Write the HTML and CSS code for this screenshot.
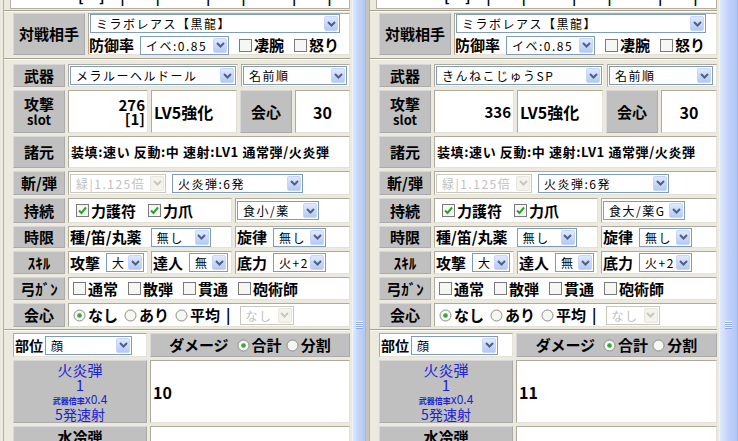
FILE: index.html
```html
<!DOCTYPE html>
<html lang="ja">
<head>
<meta charset="UTF-8">
<meta name="viewport" content="width=device-width, initial-scale=1">
<title>ダメージ計算 比較</title>
<link rel="stylesheet" href="styles.css">
</head>
<body>

<!-- 左: メラルーヘルドール -->
<div class="frame frame-left">
  <div class="page">
    <div class="wrap">
      <div class="strip"><span class="strip-text">[ ] | &nbsp;| &nbsp; | &nbsp;| &nbsp; | &nbsp;|</span></div>

      <div class="sec sec-enemy">
        <div class="label">対戦相手</div>
        <div class="cell enemy-cell">
          <div class="line">
            <span class="sel sel-enemy"><select><option>ミラボレアス【黒龍】</option></select><span class="sel-btn"><svg class="chev" viewBox="0 0 9 6"><path d="M1 1l3.5 3.5L8 1"/></svg></span></span>
          </div>
          <div class="line">
            <span>防御率</span>
            <span class="sel sel-def"><select><option>イベ:0.85</option></select><span class="sel-btn"><svg class="chev" viewBox="0 0 9 6"><path d="M1 1l3.5 3.5L8 1"/></svg></span></span>
            <label class="chk"><svg class="box" viewBox="0 0 13 13"><rect x=".5" y=".5" width="12" height="12"/></svg>凄腕</label>
            <label class="chk"><svg class="box" viewBox="0 0 13 13"><rect x=".5" y=".5" width="12" height="12"/></svg>怒り</label>
          </div>
        </div>
      </div>

      <div class="sec sec-main">
        <div class="row r-weapon">
          <div class="label">武器</div>
          <div class="cell c-name"><span class="sel sel-weapon"><select><option>メラルーヘルドール</option></select><span class="sel-btn"><svg class="chev" viewBox="0 0 9 6"><path d="M1 1l3.5 3.5L8 1"/></svg></span></span></div>
          <div class="cell"><span class="sel sel-sort"><select><option>名前順</option></select><span class="sel-btn"><svg class="chev" viewBox="0 0 9 6"><path d="M1 1l3.5 3.5L8 1"/></svg></span></span></div>
        </div>
        <div class="row r-attack">
          <div class="label">攻撃<small>slot</small></div>
          <div class="cell c-val"><span>276</span><span>[1]</span></div>
          <div class="cell c-lv">LV5強化</div>
          <div class="label c-crit">会心</div>
          <div class="cell c-num">30</div>
        </div>
        <div class="row r-spec">
          <div class="label">諸元</div>
          <div class="cell spec">装填:速い 反動:中 速射:LV1 通常弾/火炎弾</div>
        </div>
        <div class="row r-ammo">
          <div class="label">斬/弾</div>
          <div class="cell">
            <span class="sel sel-sharp is-off"><select disabled><option>緑|1.125倍</option></select><span class="sel-btn"><svg class="chev" viewBox="0 0 9 6"><path d="M1 1l3.5 3.5L8 1"/></svg></span></span>
            <span class="sel sel-ammo"><select><option>火炎弾:6発</option></select><span class="sel-btn"><svg class="chev" viewBox="0 0 9 6"><path d="M1 1l3.5 3.5L8 1"/></svg></span></span>
          </div>
        </div>
        <div class="row r-buff">
          <div class="label">持続</div>
          <div class="cell c-wide checks buff">
            <label class="chk"><svg class="box" viewBox="0 0 13 13"><rect x=".5" y=".5" width="12" height="12"/><path d="M3 6.5l2.5 2.5 4.5-5.5"/></svg>力護符</label>
            <label class="chk"><svg class="box" viewBox="0 0 13 13"><rect x=".5" y=".5" width="12" height="12"/><path d="M3 6.5l2.5 2.5 4.5-5.5"/></svg>力爪</label>
          </div>
          <div class="cell"><span class="sel sel-food"><select><option>食小/薬</option></select><span class="sel-btn"><svg class="chev" viewBox="0 0 9 6"><path d="M1 1l3.5 3.5L8 1"/></svg></span></span></div>
        </div>
        <div class="row r-item">
          <div class="label">時限</div>
          <div class="cell c-wide item">種/笛/丸薬<span class="sel sel-item"><select><option>無し</option></select><span class="sel-btn"><svg class="chev" viewBox="0 0 9 6"><path d="M1 1l3.5 3.5L8 1"/></svg></span></span></div>
          <div class="cell">旋律<span class="sel sel-song"><select><option>無し</option></select><span class="sel-btn"><svg class="chev" viewBox="0 0 9 6"><path d="M1 1l3.5 3.5L8 1"/></svg></span></span></div>
        </div>
        <div class="row r-skill">
          <div class="label">ｽｷﾙ</div>
          <div class="cell c-atk">攻撃<span class="sel sel-atk"><select><option>大</option></select><span class="sel-btn"><svg class="chev" viewBox="0 0 9 6"><path d="M1 1l3.5 3.5L8 1"/></svg></span></span></div>
          <div class="cell c-master">達人<span class="sel sel-master"><select><option>無</option></select><span class="sel-btn"><svg class="chev" viewBox="0 0 9 6"><path d="M1 1l3.5 3.5L8 1"/></svg></span></span></div>
          <div class="cell">底力<span class="sel sel-adren"><select><option>火+2</option></select><span class="sel-btn"><svg class="chev" viewBox="0 0 9 6"><path d="M1 1l3.5 3.5L8 1"/></svg></span></span></div>
        </div>
        <div class="row r-gun">
          <div class="label">弓ｶﾞﾝ</div>
          <div class="cell checks">
            <label class="chk"><svg class="box" viewBox="0 0 13 13"><rect x=".5" y=".5" width="12" height="12"/></svg>通常</label>
            <label class="chk"><svg class="box" viewBox="0 0 13 13"><rect x=".5" y=".5" width="12" height="12"/></svg>散弾</label>
            <label class="chk"><svg class="box" viewBox="0 0 13 13"><rect x=".5" y=".5" width="12" height="12"/></svg>貫通</label>
            <label class="chk"><svg class="box" viewBox="0 0 13 13"><rect x=".5" y=".5" width="12" height="12"/></svg>砲術師</label>
          </div>
        </div>
        <div class="row r-crit">
          <div class="label">会心</div>
          <div class="cell radios">
            <label class="chk"><svg class="dot" viewBox="0 0 13 13"><circle class="ring" cx="6.5" cy="6.5" r="5.5"/><circle class="pip" cx="6.5" cy="6.5" r="2.3"/></svg>なし</label>
            <label class="chk"><svg class="dot" viewBox="0 0 13 13"><circle class="ring" cx="6.5" cy="6.5" r="5.5"/></svg>あり</label>
            <label class="chk"><svg class="dot" viewBox="0 0 13 13"><circle class="ring" cx="6.5" cy="6.5" r="5.5"/></svg>平均</label>
            <span class="bar">|</span>
            <span class="sel sel-crit is-off"><select disabled><option>なし</option></select><span class="sel-btn"><svg class="chev" viewBox="0 0 9 6"><path d="M1 1l3.5 3.5L8 1"/></svg></span></span>
          </div>
        </div>
      </div>

      <div class="sec sec-dmg">
        <div class="cell part">部位<span class="sel sel-part"><select><option>顔</option></select><span class="sel-btn"><svg class="chev" viewBox="0 0 9 6"><path d="M1 1l3.5 3.5L8 1"/></svg></span></span></div>
        <div class="label dmg-head">ダメージ
          <label class="chk"><svg class="dot" viewBox="0 0 13 13"><circle class="ring" cx="6.5" cy="6.5" r="5.5"/><circle class="pip" cx="6.5" cy="6.5" r="2.3"/></svg>合計</label>
          <label class="chk"><svg class="dot" viewBox="0 0 13 13"><circle class="ring" cx="6.5" cy="6.5" r="5.5"/></svg>分割</label>
        </div>
        <div class="label ammo-name">
          <span>火炎弾</span><span>1</span><span class="ratio"><small>武器倍率</small>x0.4</span><span class="rapid">5発速射</span>
        </div>
        <div class="cell dmg-val">10</div>
        <div class="label ammo-next">水冷弾</div>
        <div class="cell"></div>
      </div>
    </div>
  </div>
  <div class="scrollbar"><div class="grip"></div></div>
</div>

<!-- 右: きんねこじゅうSP -->
<div class="frame frame-right">
  <div class="page">
    <div class="wrap">
      <div class="strip"><span class="strip-text">[ ] | &nbsp;| &nbsp; | &nbsp;| &nbsp; | &nbsp;|</span></div>

      <div class="sec sec-enemy">
        <div class="label">対戦相手</div>
        <div class="cell enemy-cell">
          <div class="line">
            <span class="sel sel-enemy"><select><option>ミラボレアス【黒龍】</option></select><span class="sel-btn"><svg class="chev" viewBox="0 0 9 6"><path d="M1 1l3.5 3.5L8 1"/></svg></span></span>
          </div>
          <div class="line">
            <span>防御率</span>
            <span class="sel sel-def"><select><option>イベ:0.85</option></select><span class="sel-btn"><svg class="chev" viewBox="0 0 9 6"><path d="M1 1l3.5 3.5L8 1"/></svg></span></span>
            <label class="chk"><svg class="box" viewBox="0 0 13 13"><rect x=".5" y=".5" width="12" height="12"/></svg>凄腕</label>
            <label class="chk"><svg class="box" viewBox="0 0 13 13"><rect x=".5" y=".5" width="12" height="12"/></svg>怒り</label>
          </div>
        </div>
      </div>

      <div class="sec sec-main">
        <div class="row r-weapon">
          <div class="label">武器</div>
          <div class="cell c-name"><span class="sel sel-weapon"><select><option>きんねこじゅうSP</option></select><span class="sel-btn"><svg class="chev" viewBox="0 0 9 6"><path d="M1 1l3.5 3.5L8 1"/></svg></span></span></div>
          <div class="cell"><span class="sel sel-sort"><select><option>名前順</option></select><span class="sel-btn"><svg class="chev" viewBox="0 0 9 6"><path d="M1 1l3.5 3.5L8 1"/></svg></span></span></div>
        </div>
        <div class="row r-attack">
          <div class="label">攻撃<small>slot</small></div>
          <div class="cell c-val"><span>336</span></div>
          <div class="cell c-lv">LV5強化</div>
          <div class="label c-crit">会心</div>
          <div class="cell c-num">30</div>
        </div>
        <div class="row r-spec">
          <div class="label">諸元</div>
          <div class="cell spec">装填:速い 反動:中 速射:LV1 通常弾/火炎弾</div>
        </div>
        <div class="row r-ammo">
          <div class="label">斬/弾</div>
          <div class="cell">
            <span class="sel sel-sharp is-off"><select disabled><option>緑|1.125倍</option></select><span class="sel-btn"><svg class="chev" viewBox="0 0 9 6"><path d="M1 1l3.5 3.5L8 1"/></svg></span></span>
            <span class="sel sel-ammo"><select><option>火炎弾:6発</option></select><span class="sel-btn"><svg class="chev" viewBox="0 0 9 6"><path d="M1 1l3.5 3.5L8 1"/></svg></span></span>
          </div>
        </div>
        <div class="row r-buff">
          <div class="label">持続</div>
          <div class="cell c-wide checks buff">
            <label class="chk"><svg class="box" viewBox="0 0 13 13"><rect x=".5" y=".5" width="12" height="12"/><path d="M3 6.5l2.5 2.5 4.5-5.5"/></svg>力護符</label>
            <label class="chk"><svg class="box" viewBox="0 0 13 13"><rect x=".5" y=".5" width="12" height="12"/><path d="M3 6.5l2.5 2.5 4.5-5.5"/></svg>力爪</label>
          </div>
          <div class="cell"><span class="sel sel-food"><select><option>食大/薬G</option></select><span class="sel-btn"><svg class="chev" viewBox="0 0 9 6"><path d="M1 1l3.5 3.5L8 1"/></svg></span></span></div>
        </div>
        <div class="row r-item">
          <div class="label">時限</div>
          <div class="cell c-wide item">種/笛/丸薬<span class="sel sel-item"><select><option>無し</option></select><span class="sel-btn"><svg class="chev" viewBox="0 0 9 6"><path d="M1 1l3.5 3.5L8 1"/></svg></span></span></div>
          <div class="cell">旋律<span class="sel sel-song"><select><option>無し</option></select><span class="sel-btn"><svg class="chev" viewBox="0 0 9 6"><path d="M1 1l3.5 3.5L8 1"/></svg></span></span></div>
        </div>
        <div class="row r-skill">
          <div class="label">ｽｷﾙ</div>
          <div class="cell c-atk">攻撃<span class="sel sel-atk"><select><option>大</option></select><span class="sel-btn"><svg class="chev" viewBox="0 0 9 6"><path d="M1 1l3.5 3.5L8 1"/></svg></span></span></div>
          <div class="cell c-master">達人<span class="sel sel-master"><select><option>無</option></select><span class="sel-btn"><svg class="chev" viewBox="0 0 9 6"><path d="M1 1l3.5 3.5L8 1"/></svg></span></span></div>
          <div class="cell">底力<span class="sel sel-adren"><select><option>火+2</option></select><span class="sel-btn"><svg class="chev" viewBox="0 0 9 6"><path d="M1 1l3.5 3.5L8 1"/></svg></span></span></div>
        </div>
        <div class="row r-gun">
          <div class="label">弓ｶﾞﾝ</div>
          <div class="cell checks">
            <label class="chk"><svg class="box" viewBox="0 0 13 13"><rect x=".5" y=".5" width="12" height="12"/></svg>通常</label>
            <label class="chk"><svg class="box" viewBox="0 0 13 13"><rect x=".5" y=".5" width="12" height="12"/></svg>散弾</label>
            <label class="chk"><svg class="box" viewBox="0 0 13 13"><rect x=".5" y=".5" width="12" height="12"/></svg>貫通</label>
            <label class="chk"><svg class="box" viewBox="0 0 13 13"><rect x=".5" y=".5" width="12" height="12"/></svg>砲術師</label>
          </div>
        </div>
        <div class="row r-crit">
          <div class="label">会心</div>
          <div class="cell radios">
            <label class="chk"><svg class="dot" viewBox="0 0 13 13"><circle class="ring" cx="6.5" cy="6.5" r="5.5"/><circle class="pip" cx="6.5" cy="6.5" r="2.3"/></svg>なし</label>
            <label class="chk"><svg class="dot" viewBox="0 0 13 13"><circle class="ring" cx="6.5" cy="6.5" r="5.5"/></svg>あり</label>
            <label class="chk"><svg class="dot" viewBox="0 0 13 13"><circle class="ring" cx="6.5" cy="6.5" r="5.5"/></svg>平均</label>
            <span class="bar">|</span>
            <span class="sel sel-crit is-off"><select disabled><option>なし</option></select><span class="sel-btn"><svg class="chev" viewBox="0 0 9 6"><path d="M1 1l3.5 3.5L8 1"/></svg></span></span>
          </div>
        </div>
      </div>

      <div class="sec sec-dmg">
        <div class="cell part">部位<span class="sel sel-part"><select><option>顔</option></select><span class="sel-btn"><svg class="chev" viewBox="0 0 9 6"><path d="M1 1l3.5 3.5L8 1"/></svg></span></span></div>
        <div class="label dmg-head">ダメージ
          <label class="chk"><svg class="dot" viewBox="0 0 13 13"><circle class="ring" cx="6.5" cy="6.5" r="5.5"/><circle class="pip" cx="6.5" cy="6.5" r="2.3"/></svg>合計</label>
          <label class="chk"><svg class="dot" viewBox="0 0 13 13"><circle class="ring" cx="6.5" cy="6.5" r="5.5"/></svg>分割</label>
        </div>
        <div class="label ammo-name">
          <span>火炎弾</span><span>1</span><span class="ratio"><small>武器倍率</small>x0.4</span><span class="rapid">5発速射</span>
        </div>
        <div class="cell dmg-val">11</div>
        <div class="label ammo-next">水冷弾</div>
        <div class="cell"></div>
      </div>
    </div>
  </div>
  <div class="scrollbar"><div class="grip"></div></div>
</div>

</body>
</html>
```

FILE: styles.css
```css
body {
    margin: 0;
    display: flex;
    height: 441px;
    overflow: hidden;
    background: #ece9de;
    color: #000;
    font-family: "Noto Sans CJK JP", "DejaVu Sans", sans-serif;
}

/* ─── フレーム ─────────────────────────── */
.frame {
    flex: none;
    display: flex;
    height: 441px;
    overflow: hidden;
    box-sizing: border-box;
}

.frame-left {
    width: 366px;
}

.frame-right {
    width: 372px;
    border-left: 3px solid #c6c3b9;
}

.page {
    flex: 1;
    min-width: 0;
    padding: 0 2px 0 3px;
}

.frame-right .page {
    padding-left: 0;
}

.wrap {
    height: 100%;
    border-left: 1px solid #b7b3a4;
    padding-left: 9px;
}

.scrollbar {
    flex: none;
    width: 14px;
    padding-top: 321px;
    box-sizing: border-box;
    background: linear-gradient(to right, #dfe8fd, #c4d4fa 45%, #b2c6f3);
    border-left: 1px solid #eef3fe;
    border-right: 1px solid #a3b8ea;
}

.frame-right .scrollbar {
    width: 19px;
}

.grip {
    width: 7px;
    height: 8px;
    margin: 0 auto;
    background: repeating-linear-gradient(#f3f7ff 0 1px, #8da8e3 1px 2px);
}

/* 上にはみ出した前の行 */
.strip {
    height: 9px;
    margin-left: -3px;
    background: #fff;
    border: 1px solid #b3b0a3;
    border-top: 0;
    box-sizing: border-box;
    overflow: hidden;
}

.strip-text {
    display: block;
    margin-top: -12px;
    padding-left: 67px;
    font-size: 15px;
    font-weight: 700;
    line-height: 15px;
    word-spacing: 12px;
    white-space: pre;
}

/* ─── セクション ─────────────────────────── */
.sec {
    margin-left: -9px;
    padding-left: 9px;
    border-top: 1px solid #a6a293;
    box-shadow: inset 0 1px #fbfaf5;
}

.sec-enemy {
    margin-top: 1px;
    padding-top: 2px;
    padding-bottom: 3px;
    display: grid;
    grid-template-columns: 72px 1fr;
    grid-template-rows: 42px;
    column-gap: 3px;
}

.sec-main {
    padding-top: 5px;
    padding-bottom: 2px;
    display: flex;
    flex-direction: column;
    gap: 3px;
}

.sec-dmg {
    padding-top: 3px;
    display: grid;
    grid-template-columns: 134px 1fr;
    grid-template-rows: 24px 63px 63px;
    gap: 3px;
}

/* ─── セル ─────────────────────────── */
.label {
    display: flex;
    flex-direction: column;
    align-items: center;
    justify-content: center;
    box-sizing: border-box;
    background: #c0c0c0;
    border: 1px solid;
    border-color: #d8d8d8 #ababab #ababab #d8d8d8;
    font-size: 15px;
    font-weight: 700;
    line-height: 16px;
}

.label small {
    font-size: 13px;
    line-height: 15px;
}

.cell {
    display: flex;
    align-items: center;
    gap: 6px;
    min-width: 0;
    box-sizing: border-box;
    padding: 0 1px;
    background: #fff;
    border: 1px solid;
    border-color: #aeaa9c #e4e1d6 #e4e1d6 #aeaa9c;
    font-size: 15px;
    font-weight: 700;
    line-height: 16px;
    white-space: nowrap;
}

.enemy-cell {
    flex-direction: column;
    align-items: stretch;
    justify-content: flex-start;
    gap: 3px;
    padding-left: 0;
}

.line {
    display: flex;
    align-items: center;
    gap: 6px;
    height: 19px;
}

.line + .line {
    height: 18px;
}

.line .chk {
    margin-left: 4px;
}

.row {
    display: flex;
    gap: 3px;
}

.row > .label {
    flex: none;
    width: 52px;
}

.row > .cell:last-child {
    flex: 1;
}

.r-weapon { height: 23px; }
.r-attack { height: 43px; }
.r-spec { height: 32px; }
.r-ammo { height: 24px; }
.r-buff { height: 25px; }
.r-item { height: 22px; }
.r-skill { height: 23px; }
.r-gun { height: 23px; }
.r-crit { height: 24px; }

.c-name { flex: none; width: 170px; }
.c-wide { flex: none; width: 164px; }
.c-atk { flex: none; width: 80px; }
.c-master { flex: none; width: 81px; }

.c-val {
    flex: none;
    width: 80px;
    flex-direction: column;
    align-items: flex-end;
    justify-content: center;
    gap: 0;
    padding-right: 2px;
    font-size: 15px;
    line-height: 14px;
}

.c-lv {
    flex: none;
    width: 86px;
    padding-left: 2px;
    font-size: 16px;
}

.c-crit {
    flex: none;
    width: 48px;
}

.c-num {
    justify-content: center;
    font-size: 16px;
}

.spec {
    padding-left: 2px;
    font-size: 13px;
    letter-spacing: 0.6px;
}

.item .sel {
    margin-left: 3px;
}

.checks {
    gap: 10px;
    padding-left: 4px;
}

.buff {
    padding-left: 7px;
    gap: 12px;
}

.radios {
    gap: 6px;
    padding-left: 4px;
}

.bar {
    margin-right: 3px;
}

.part {
    gap: 2px;
    font-size: 14px;
}

.dmg-head {
    flex-direction: row;
    gap: 4px;
}

.dmg-head .chk:first-of-type {
    margin-left: 4px;
}

.dmg-val {
    padding-left: 2px;
    font-size: 16px;
}

.ammo-name {
    color: #1e1ed4;
    font-weight: 400;
    font-size: 15px;
    line-height: 15px;
}

.ammo-name .ratio {
    font-size: 12px;
    line-height: 13px;
}

.ammo-name .ratio small {
    font-size: 8px;
    font-weight: 700;
    line-height: 13px;
}

.ammo-name .rapid {
    font-size: 14px;
}

.ammo-next {
    justify-content: flex-start;
    padding-top: 2px;
}

/* ─── チェック / ラジオ ─────────────────────────── */
.chk {
    display: inline-flex;
    align-items: center;
    gap: 2px;
}

.box,
.dot {
    flex: none;
    width: 13px;
    height: 13px;
}

.box rect {
    fill: #f6f6f2;
    stroke: #7a7a7a;
}

.box path {
    fill: none;
    stroke: #2e9e2e;
    stroke-width: 2;
}

.dot .ring {
    fill: #f6f6f2;
    stroke: #8c8c8c;
}

.dot .pip {
    fill: #38a838;
}

/* ─── プルダウン ─────────────────────────── */
.sel {
    flex: none;
    display: inline-flex;
    align-items: center;
    height: 19px;
    box-sizing: border-box;
    background: #fff;
    border: 1px solid #7f9db9;
}

.sel select {
    -webkit-appearance: none;
    appearance: none;
    flex: 1;
    min-width: 0;
    height: 100%;
    margin: 0;
    padding: 0 0 0 5px;
    border: 0;
    outline: none;
    background: transparent;
    color: #000;
    font: 400 12px "Noto Sans CJK JP", sans-serif;
    letter-spacing: 1.5px;
}

.sel-btn {
    flex: none;
    display: flex;
    align-items: center;
    justify-content: center;
    width: 14px;
    height: 15px;
    margin-right: 1px;
    box-sizing: border-box;
    border: 1px solid #c6d5fb;
    border-radius: 2px;
    background: linear-gradient(#e0e9fe, #b5c9f6);
}

.chev {
    width: 9px;
    height: 6px;
}

.chev path {
    fill: none;
    stroke: #4d6185;
    stroke-width: 2;
}

.sel.is-off {
    border-color: #cac8bc;
}

.sel.is-off select {
    color: #a6a6a6;
    background: #fff;
}

.sel.is-off .sel-btn {
    border-color: #e7e5dc;
    background: #f4f3ee;
}

.sel.is-off .chev path {
    stroke: #cac8bc;
}

.sel-enemy { width: 250px; margin-left: 1px; }
.sel-def { width: 89px; }
.sel-weapon { width: 166px; }
.sel-sort { width: 104px; }
.sel-sharp { width: 96px; }
.sel-ammo { width: 131px; }
.sel-food { width: 82px; }
.sel-item { width: 60px; }
.sel-song { width: 53px; }
.sel-atk { width: 38px; }
.sel-master { width: 39px; }
.sel-adren { width: 53px; }
.sel-crit { width: 54px; }
.sel-part { width: 87px; }
```
